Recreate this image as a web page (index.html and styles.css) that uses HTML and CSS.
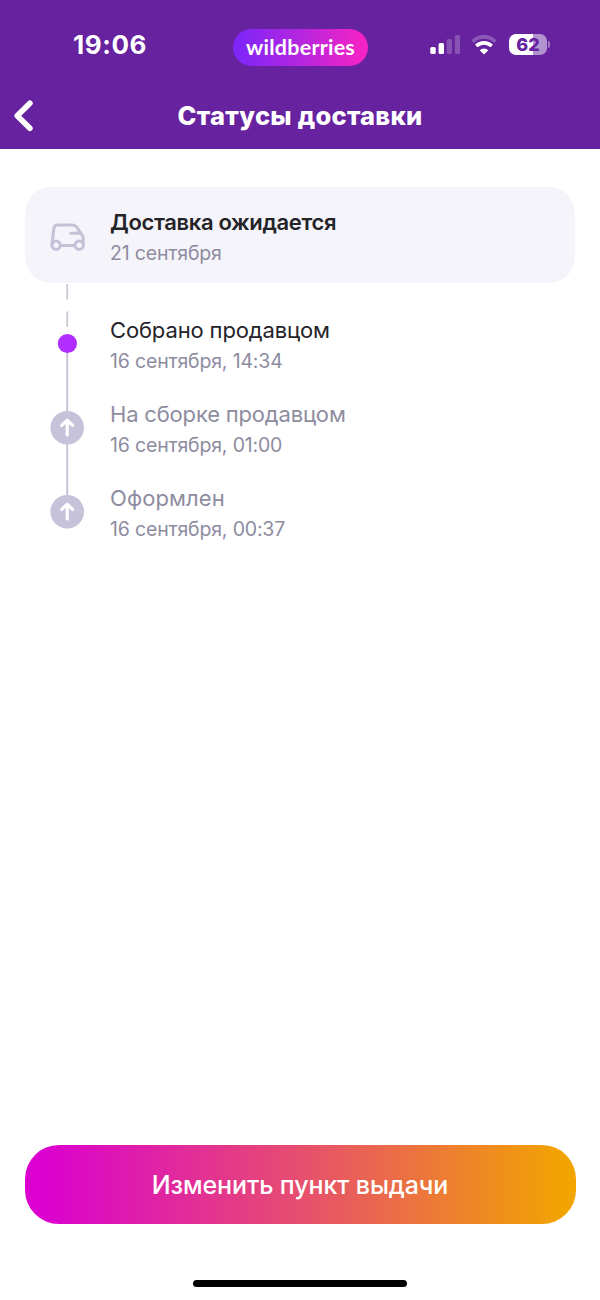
FILE: index.html
```html
<!DOCTYPE html>
<html lang="ru">
<head>
<meta charset="utf-8">
<title>Статусы доставки</title>
<link rel="stylesheet" href="styles.css">
</head>
<body>
<div class="screen">
  <header class="header">
    <div class="status-bar">
      <div class="time">19:06</div>
      <div class="brand"><span class="brand-name">wildberries</span></div>
      <div class="indicators">
        <svg class="signal" width="30" height="19" viewBox="0 0 30 19" fill="#fff">
          <rect x="0.3" y="12" width="5.4" height="7" rx="1.5"/>
          <rect x="8.6" y="8" width="5.4" height="11" rx="1.5"/>
          <rect x="16.8" y="4" width="5.2" height="15" rx="1.5" opacity=".22"/>
          <rect x="24.8" y="0" width="5.2" height="19" rx="1.5" opacity=".22"/>
        </svg>
        <svg class="wifi" width="26" height="20" viewBox="0 0 26 20" fill="none" stroke="#fff" stroke-width="3.6">
          <path d="M1.6 6.6a16.2 16.2 0 0 1 22.8 0" opacity=".25"/>
          <path d="M5.3 11.1a10.9 10.9 0 0 1 15.4 0"/>
          <path d="M8.7 15.2a6 6 0 0 1 8.6 0L13 19.6z" fill="#fff" stroke="none"/>
        </svg>
        <div class="battery"><span class="battery-level">62</span></div>
        <span class="battery-tip"></span>
      </div>
    </div>
    <div class="nav">
      <svg class="back" width="20" height="32" viewBox="0 0 20 32" fill="none" stroke="#fff" stroke-width="5.6" stroke-linecap="round" stroke-linejoin="round"><path d="M15.9 3.2 3.2 15.8 15.9 28.2"/></svg>
      <h1 class="title">Статусы доставки</h1>
    </div>
  </header>

  <main class="content">
    <section class="card">
      <svg class="car" width="36" height="28" viewBox="0 0 36 28" fill="none" stroke="#c5c2d8" stroke-width="3" stroke-linecap="round" stroke-linejoin="round">
        <path d="M2 21.5 3.8 5.8Q4.3 2 8.1 2H22.3Q25.1 2 26.7 4.2L31.9 11.6Q33.2 13.4 33.2 15.6V21.5M11 22.5H24.5M20.8 10.2H30.6"/>
        <circle cx="6.1" cy="22.3" r="4.2"/>
        <circle cx="29.2" cy="22.3" r="4.2"/>
      </svg>
      <div class="step">
        <div class="step-name expected">Доставка ожидается</div>
        <div class="step-date card-date">21 сентября</div>
      </div>
    </section>
    <section class="timeline">
      <svg class="rail" width="34" height="246" viewBox="0 0 34 246" fill="none">
        <path d="M17.2 1V16.5M17.2 28.5V44" stroke="#cac8d2" stroke-width="1.8"/>
        <path d="M17.2 60V228" stroke="#c8c5da" stroke-width="2"/>
        <circle cx="17.4" cy="60.5" r="9.6" fill="#b02eff"/>
        <circle cx="17.2" cy="144.7" r="16.8" fill="#c5c2da"/>
        <circle cx="17.2" cy="228.7" r="16.8" fill="#c5c2da"/>
        <g stroke="#fff" stroke-width="3.2" stroke-linecap="round" stroke-linejoin="round">
          <path id="arrow" d="M17.2 152V138M11.8 142.4 17.2 137.2 22.6 142.4"/>
          <use href="#arrow" y="84"/>
        </g>
      </svg>
      <div class="steps">
        <div class="step">
          <div class="step-name current">Собрано продавцом</div>
          <div class="step-date">16 сентября, 14:34</div>
        </div>
        <div class="step">
          <div class="step-name">На сборке продавцом</div>
          <div class="step-date">16 сентября, 01:00</div>
        </div>
        <div class="step">
          <div class="step-name short">Оформлен</div>
          <div class="step-date">16 сентября, 00:37</div>
        </div>
      </div>
    </section>
  </main>

  <footer class="footer">
    <button class="change">Изменить пункт выдачи</button>
    <div class="home-bar"></div>
  </footer>
</div>
</body>
</html>
```
FILE: styles.css
```css
* { box-sizing: border-box; }
body { margin: 0; background: #fff; font-family: Inter, "Liberation Sans", sans-serif; }
.screen { width: 600px; height: 1300px; display: flex; flex-direction: column; overflow: hidden; }

.header { height: 149px; background: #66229f; color: #fff; }
.status-bar { height: 83px; padding: 29px 50px 0 73px; display: grid; grid-template-columns: 160px 135px 1fr; align-items: start; }
.time { font-size: 26px; line-height: 32px; font-weight: 700; letter-spacing: .55px; white-space: nowrap; }
.brand { height: 37px; border-radius: 19px; background: linear-gradient(90deg, #8126f8 5%, #b226e0 48%, #f323c5 95%); display: flex; justify-content: center; }
.brand-name { font-family: Lato, sans-serif; font-size: 21.5px; line-height: 36px; font-weight: 700; letter-spacing: .25px; }
.indicators { display: flex; align-items: flex-start; padding: 6px 0 0 62px; }
.signal { flex: none; }
.wifi { flex: none; margin-left: 11px; }
.battery { flex: none; width: 38px; height: 21px; margin: -1px 0 0 12px; border-radius: 7px; background: linear-gradient(90deg, #fff 62%, #b292cf 62%); color: #66229f; text-align: center; }
.battery-level { font-size: 18px; line-height: 21px; font-weight: 800; display: block; }
.battery-tip { flex: none; width: 2px; height: 7px; margin: 6px 0 0 1px; border-radius: 0 3px 3px 0; background: #a37ec5; }

.nav { display: grid; grid-template-columns: 20px 1fr 20px; padding: 0 14px; align-items: center; height: 66px; }
.title { margin: 0; font-size: 25.5px; line-height: 32px; font-weight: 800; text-align: center; white-space: nowrap; letter-spacing: .25px; }

.content { flex: 1; padding: 38px 25px 0; }
.card { height: 96px; border-radius: 26px; background: #f5f4fa; display: flex; padding: 19px 25px 0; }
.car { margin: 17px 24px 0 0; flex: none; }
.step { height: 84px; white-space: nowrap; color: #8e8c9f; }
.step-name { font-size: 22px; line-height: 32px; letter-spacing: -.18px; }
.step-date { font-size: 19.5px; line-height: 30px; letter-spacing: -.17px; }
.expected { color: #242328; font-weight: 600; letter-spacing: -.35px; }
.current { color: #242328; letter-spacing: -.14px; }
.short { letter-spacing: .1px; }
.timeline { display: flex; padding-left: 25px; }
.rail { flex: none; margin-right: 26px; }
.steps { padding-top: 31px; }

.footer { padding: 0 24.5px 13px; display: flex; flex-direction: column; align-items: center; gap: 56.5px; }
.change { width: 551px; height: 79px; border: 0; border-radius: 34px; background: linear-gradient(90deg, #db00d0 3%, #e7526a 52%, #f2a400 98%); color: #fff; font-family: inherit; font-size: 25px; line-height: 32px; padding: 2px 0 0; font-weight: 500; letter-spacing: -.1px; white-space: nowrap; }
.home-bar { width: 214px; height: 7px; border-radius: 4px; background: #000; }
```
